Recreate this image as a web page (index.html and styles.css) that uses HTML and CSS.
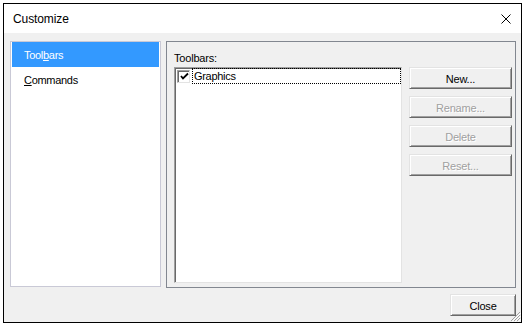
FILE: index.html
```html
<!DOCTYPE html>
<html lang="en">
<head>
    <meta charset="UTF-8">
    <meta name="viewport" content="width=device-width, initial-scale=1.0">
    <title>Customize</title>
    <link rel="stylesheet" href="styles.css">
</head>
<body>
    <div class="window">
        <div class="titlebar">
            <span class="title">Customize</span>
            <svg class="close-x" width="10" height="10" viewBox="0 0 10 10">
                <path d="M0.5 0.5 L9.5 9.5 M9.5 0.5 L0.5 9.5" stroke="#000" stroke-width="1" fill="none"/>
            </svg>
        </div>
        <div class="dialog-body">
            <div class="content">
                <ul class="pages">
                    <li class="selected">Tool<u>b</u>ars</li>
                    <li><u>C</u>ommands</li>
                </ul>
                <div class="panel">
                    <div class="label">Toolbars:</div>
                    <div class="listbox">
                        <div class="item">
                            <span class="check">
                                <svg width="9" height="9" viewBox="0 0 9 9">
                                    <path d="M1 4 L3 6.5 L8 1.5" stroke="#000" stroke-width="1.8" fill="none"/>
                                </svg>
                            </span>
                            <span class="item-text">Graphics</span>
                        </div>
                    </div>
                    <div class="buttons">
                        <button class="btn">New...</button>
                        <button class="btn" disabled>Rename...</button>
                        <button class="btn" disabled>Delete</button>
                        <button class="btn" disabled>Reset...</button>
                    </div>
                </div>
            </div>
            <div class="footer">
                <button class="btn close-btn">Close</button>
            </div>
        </div>
        <svg class="grip" width="11" height="11" viewBox="0 0 11 11">
            <path d="M10 1 L1 10 M10 4 L4 10 M10 7 L7 10" stroke="#a0a0a0" stroke-width="1" fill="none"/>
            <path d="M11 2 L2 11 M11 5 L5 11 M11 8 L8 11" stroke="#fff" stroke-width="1" fill="none"/>
        </svg>
    </div>
</body>
</html>
```

FILE: styles.css
```css
body {
    margin: 0;
    padding: 3px 0 0 3px;
    background-color: #fff;
    font-family: "Liberation Sans", Arial, sans-serif;
    font-size: 11px;
    color: #000;
}
.window {
    position: relative;
    box-sizing: border-box;
    width: 519px;
    height: 320px;
    border: 1px solid #000;
    background-color: #f0f0f0;
}
.titlebar {
    height: 29px;
    background-color: #fff;
    display: flex;
    align-items: center;
    justify-content: space-between;
    padding: 0 9px 0 9px;
}
.title {
    font-size: 12px;
    letter-spacing: -0.1px;
    margin-top: 1px;
}
.close-x {
    display: block;
    margin-top: 1px;
    margin-right: 1px;
}
.dialog-body {
    height: 289px;
    display: flex;
    flex-direction: column;
}
.content {
    display: flex;
    align-items: flex-start;
    gap: 5px;
    padding: 8px 5px 0 6px;
}
.pages {
    list-style-type: none;
    margin: 0;
    padding: 0 1px;
    box-sizing: border-box;
    width: 151px;
    height: 246px;
    background-color: #fff;
    border: 1px solid #c9c9d6;
}
.pages li {
    box-sizing: border-box;
    height: 25px;
    line-height: 23px;
    padding: 2px 0 0 12px;
    letter-spacing: -0.3px;
}
.pages li.selected {
    background-color: #3399ff;
    color: #fff;
}
.panel {
    box-sizing: border-box;
    width: 350px;
    height: 247px;
    border: 1px solid #828790;
    display: grid;
    grid-template-columns: 228px 103px;
    grid-template-rows: auto 1fr;
    column-gap: 7px;
    padding: 9px 3px 4px 7px;
}
.label {
    grid-column: 1 / 3;
    line-height: 14px;
    margin-bottom: 2px;
    letter-spacing: -0.2px;
}
.listbox {
    box-sizing: border-box;
    background-color: #fff;
    border: 1px solid;
    border-color: #a0a0a0 #e3e3e3 #e3e3e3 #a0a0a0;
    box-shadow: inset 1px 1px 0 #696969;
}
.item {
    display: flex;
    align-items: center;
    height: 16px;
    padding-left: 2px;
}
.check {
    box-sizing: border-box;
    width: 13px;
    height: 13px;
    background-color: #fff;
    border: 1px solid;
    border-color: #a0a0a0 #e3e3e3 #e3e3e3 #a0a0a0;
    box-shadow: inset 1px 1px 0 #696969;
    display: flex;
    align-items: center;
    justify-content: center;
    padding: 1px 0 0 1px;
}
.check svg {
    display: block;
}
.item-text {
    flex: 1;
    height: 16px;
    line-height: 13px;
    box-sizing: border-box;
    border: 1px dotted #000;
    margin-left: 2px;
    padding: 1px 0 0 1px;
    letter-spacing: -0.3px;
}
.buttons {
    display: flex;
    flex-direction: column;
    gap: 7px;
}
.btn {
    box-sizing: border-box;
    height: 22px;
    width: 103px;
    padding: 1px 0 0 0;
    font-family: "Liberation Sans", Arial, sans-serif;
    font-size: 11px;
    letter-spacing: -0.2px;
    color: #000;
    background-color: #f0f0f0;
    border: 1px solid;
    border-color: #e3e3e3 #696969 #696969 #e3e3e3;
    box-shadow: inset 1px 1px 0 #fff, inset -1px -1px 0 #a0a0a0;
}
.btn:disabled {
    color: #a0a0a0;
    text-shadow: 1px 1px 0 #fff;
}
.footer {
    display: flex;
    justify-content: flex-end;
    padding: 6px 5px 6px 0;
}
.close-btn {
    width: 66px;
}
.grip {
    position: absolute;
    right: 0;
    bottom: 0;
}
```
